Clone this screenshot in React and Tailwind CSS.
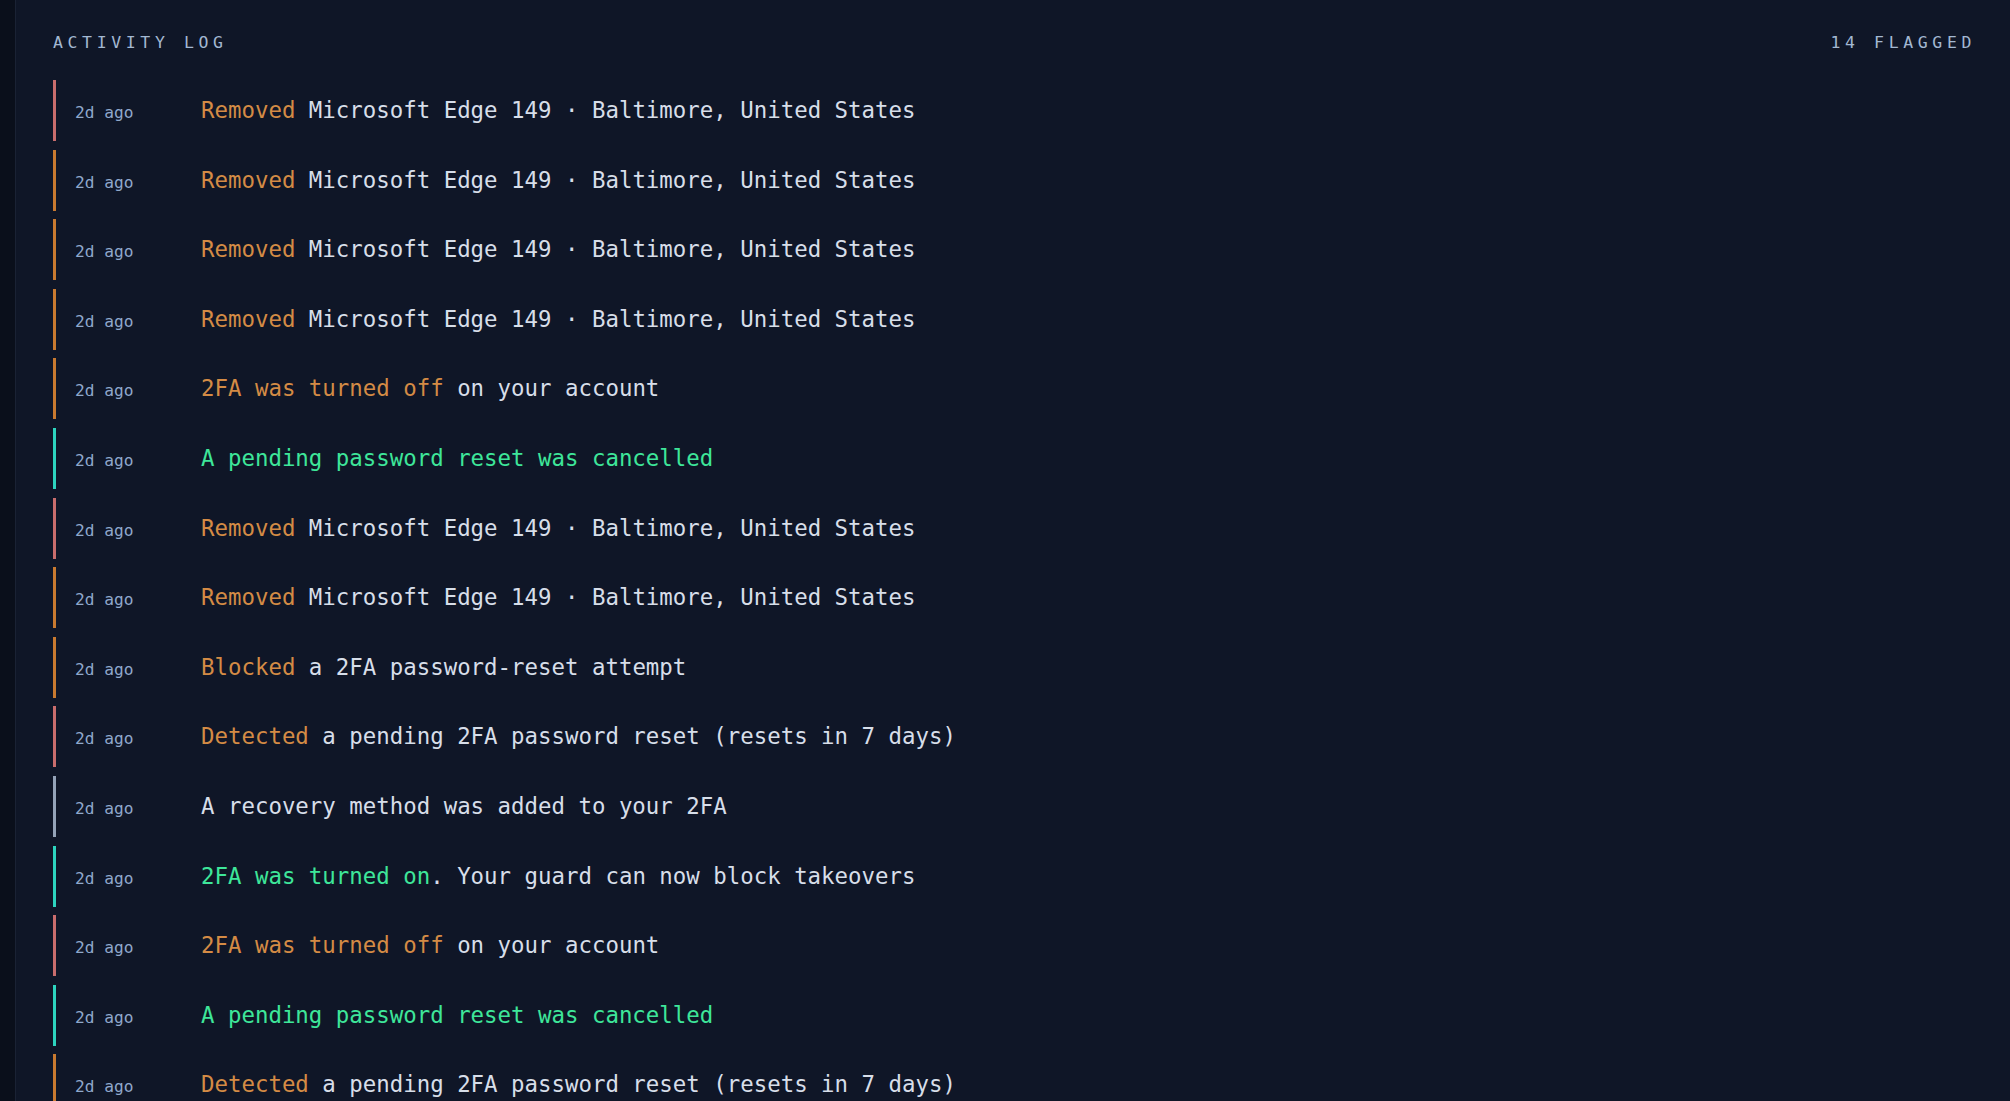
import React from 'react';

const ORANGE = 'text-[#d48b45]';
const GREEN = 'text-[#3ee69a]';

const bars = {
    red: 'border-[#c96d6d]',
    orange: 'border-[#c97a30]',
    teal: 'border-[#2dd4bf]',
    gray: 'border-[#94a3b8]',
};

const removed = { bar: 'red', hl: 'Removed', hlColor: ORANGE, rest: ' Microsoft Edge 149 · Baltimore, United States' };

const events = [
    { ...removed, bar: 'red' },
    { ...removed, bar: 'orange' },
    { ...removed, bar: 'orange' },
    { ...removed, bar: 'orange' },
    { bar: 'orange', hl: '2FA was turned off', hlColor: ORANGE, rest: ' on your account' },
    { bar: 'teal', hl: 'A pending password reset was cancelled', hlColor: GREEN, rest: '' },
    { ...removed, bar: 'red' },
    { ...removed, bar: 'orange' },
    { bar: 'orange', hl: 'Blocked', hlColor: ORANGE, rest: ' a 2FA password-reset attempt' },
    { bar: 'red', hl: 'Detected', hlColor: ORANGE, rest: ' a pending 2FA password reset (resets in 7 days)' },
    { bar: 'gray', hl: '', hlColor: '', rest: 'A recovery method was added to your 2FA' },
    { bar: 'teal', hl: '2FA was turned on', hlColor: GREEN, rest: '. Your guard can now block takeovers' },
    { bar: 'red', hl: '2FA was turned off', hlColor: ORANGE, rest: ' on your account' },
    { bar: 'teal', hl: 'A pending password reset was cancelled', hlColor: GREEN, rest: '' },
    { bar: 'orange', hl: 'Detected', hlColor: ORANGE, rest: ' a pending 2FA password reset (resets in 7 days)' },
];

export default function App() {
    return (
        <div className="flex min-h-screen bg-[#0f1627] font-['DejaVu_Sans_Mono',monospace]">
            <aside className="w-[16px] shrink-0 bg-[#0a0f1b] border-r border-[#1a2234]" />
            <main className="flex-1 pl-[37px] pr-[34px] pt-[31px]">
                <div className="flex justify-between items-center h-[24px] mb-[25px] text-[16.5px] leading-[24px] tracking-[0.28em] uppercase text-[#a3b8d2]">
                    <span>Activity Log</span>
                    <span>14 Flagged</span>
                </div>
                <ul className="flex flex-col gap-[8.6px]">
                    {events.map((ev, i) => (
                        <li
                            key={i}
                            className={`flex items-baseline h-[61px] pt-[14px] border-l-[3px] pl-[19px] ${bars[ev.bar]}`}
                        >
                            <span className="w-[126px] shrink-0 text-[16.2px] text-[#8fa8cc] whitespace-nowrap">2d ago</span>
                            <span className="text-[22.4px] leading-[33px] text-[#d7dee9] whitespace-nowrap">
                                {ev.hl && <span className={ev.hlColor}>{ev.hl}</span>}
                                {ev.rest}
                            </span>
                        </li>
                    ))}
                </ul>
            </main>
        </div>
    );
}
